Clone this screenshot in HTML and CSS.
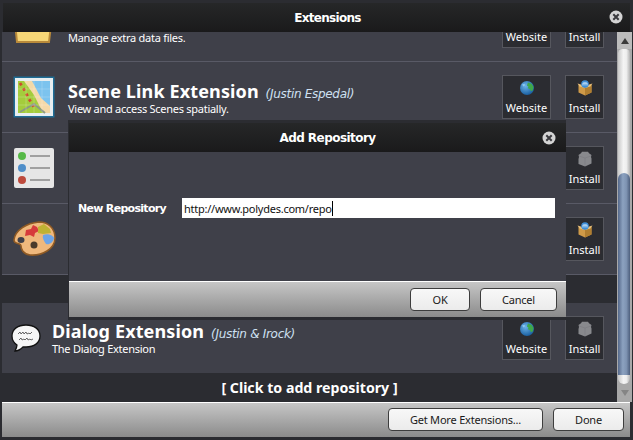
FILE: index.html
```html
<!DOCTYPE html>
<html lang="en">
<head>
<meta charset="utf-8">
<title>Extensions</title>
<link rel="stylesheet" href="styles.css">
</head>
<body>
<svg class="defs" width="0" height="0" aria-hidden="true">
  <defs>
    <radialGradient id="globeFill" cx="40%" cy="35%" r="70%">
      <stop offset="0" stop-color="#6db4ea"/><stop offset="1" stop-color="#145a9c"/>
    </radialGradient>
    <symbol id="globe" viewBox="0 0 16 16">
      <circle cx="8" cy="8" r="7" fill="url(#globeFill)"/>
      <path d="M9 2.5l3.5 1.2 2 3-.6 3.5-1.8 1-1.2-2.2-2-.8.6-1.6-1.6-1.2z" fill="#3fa84a"/>
      <path d="M3 4.5l2.5-.7.6 1.5-1.6 1.2z" fill="#8ec9f0"/>
    </symbol>
    <symbol id="box" viewBox="0 0 16 16">
      <path d="M1.500 5l6.500 2.400L14.500 5v7.500L8 15.500l-6.500-3z" fill="#cf9a48"/>
      <path d="M8 7.400L14.500 5v7.500L8 15.500z" fill="#b07e30"/>
      <path d="M.5 3.500L2.600 6.500 8 8 5.500 5zM15.500 3.500L13.400 6.500 8 8l2.500-3z" fill="#ecc27a"/>
      <circle cx="8" cy="4" r="3.800" fill="#3f8fd8"/>
      <path d="M6 5.500V3h4v2.500M8 2.500v3" stroke="#e4f2ff" stroke-width=".8" fill="none"/>
    </symbol>
    <symbol id="boxOff" viewBox="0 0 16 16">
      <path d="M5 .8h6l1 1.500 2.500 1.700-.5 2 .5 1.500v5L8 15.500l-6.500-2.500v-5L2 6l-.5-2L4 2.300z" fill="#88898d"/>
      <path d="M8 7v8M2 5l6 2 6-2" stroke="#7a7b7f" stroke-width=".6" fill="none"/>
    </symbol>
  </defs>
</svg>
<div class="window">
  <header class="titlebar">
    <span class="title-text">Extensions</span>
    <span class="close"><svg viewBox="0 0 14 14" width="14" height="14"><circle cx="7" cy="7" r="6.500" fill="#d4d4d4"/><path d="M4.300 4.300l5.400 5.400M9.700 4.300l-5.400 5.400" stroke="#3a3a3e" stroke-width="2"/></svg></span>
  </header>
  <div class="middle">
    <div class="list">
      <div class="scrolled">
        <section class="row">
          <div class="icon"><svg viewBox="0 0 44 44" width="44" height="44"><path d="M2 9h7l3-3h22v4l6 2-3 26H5z" fill="#f6d677" stroke="#b98a3a" stroke-width="2"/></svg></div>
          <div class="info info-plain"><p class="desc">Manage extra data files.</p></div>
          <div class="actions">
            <div class="act act-web"><svg class="act-ic"><use href="#globe"/></svg><span>Website</span></div>
            <div class="act act-ins"><svg class="act-ic"><use href="#box"/></svg><span>Install</span></div>
          </div>
        </section>
        <section class="row">
          <div class="icon">
            <svg viewBox="0 0 42 42" width="42" height="42">
              <rect x="0.500" y="0.500" width="41" height="41" fill="#1e6d96"/>
              <rect x="2" y="2" width="38" height="38" fill="#e8eef0"/>
              <rect x="5" y="5" width="32" height="32" fill="#7cc3ee"/>
              <path d="M5 5h14l9 17 9 8v7H5z" fill="#f4d9a8"/>
              <path d="M5 5h6l10 14 9 18H5z" fill="#a4cc3c"/>
              <path d="M7 7l5 8 4 8 5 8" stroke="#cf4a2e" stroke-width="2.800" stroke-dasharray="2.800 3.400" fill="none"/>
              <path d="M7 36l14-8 11 9" stroke="#8c9a82" stroke-width="2" fill="none"/>
              <path d="M13 5v32M21 5v32M29 5v32M5 13h32M5 21h32M5 29h32" stroke="#fff" stroke-opacity=".25" stroke-width=".8"/>
            </svg>
          </div>
          <div class="info"><h2 class="name">Scene Link Extension <em class="author">(Justin Espedal)</em></h2><p class="desc">View and access Scenes spatially.</p></div>
          <div class="actions">
            <div class="act act-web"><svg class="act-ic"><use href="#globe"/></svg><span>Website</span></div>
            <div class="act act-ins"><svg class="act-ic"><use href="#box"/></svg><span>Install</span></div>
          </div>
        </section>
        <section class="row">
          <div class="icon">
            <svg viewBox="0 0 40 40" width="40" height="40">
              <rect width="40" height="40" rx="2" fill="#e6e6e6"/>
              <circle cx="8" cy="8" r="4" fill="#56b947"/><circle cx="8" cy="20" r="4" fill="#4f8ec9"/><circle cx="8" cy="32" r="4" fill="#bd4a3c"/>
              <path d="M16 8h20M16 20h20M16 32h20" stroke="#a0a0a0" stroke-width="2"/>
            </svg>
          </div>
          <div class="info"></div>
          <div class="actions">
            <div class="act act-web"></div>
            <div class="act act-ins"><svg class="act-ic"><use href="#boxOff"/></svg><span>Install</span></div>
          </div>
        </section>
        <section class="row">
          <div class="icon">
            <svg viewBox="0 0 44 36" width="44" height="36">
              <path d="M2 19C3 9 15 2 27 1c9 0 16 6 16 16 0 11-13 18-25 17C11 33 9 28 9 25c0-4-7-1-7-6z" fill="#efb87c" stroke="#8f5a24" stroke-width="1.600"/>
              <ellipse cx="9" cy="19" rx="3.500" ry="3" fill="#3f4049"/>
              <circle cx="22" cy="24" r="3.500" fill="#4a3a2a"/>
              <path d="M14 9l5-1 2-4 4 2 2 4-4 2-1 4-4-2-5 1z" fill="#d63b3b"/>
              <path d="M26 6l6-3 6 5 1 4-8 1-5-1z" fill="#bfb233"/>
              <path d="M31 14c4-2 10 0 11 3-1 5-5 7-8 6-2-3-4-6-3-9z" fill="#6da4e6"/>
            </svg>
          </div>
          <div class="info"></div>
          <div class="actions">
            <div class="act act-web"></div>
            <div class="act act-ins"><svg class="act-ic"><use href="#box"/></svg><span>Install</span></div>
          </div>
        </section>
        <div class="gap"></div>
        <section class="row row-compact">
          <div class="icon icon-small">
            <svg viewBox="0 0 30 28" width="30" height="28">
              <path d="M15 1C7 1 1 5 1 12c0 4 2 7 5 9 0 2-1 4-2 6 3 0 6-2 8-4 1 0 2 0 3 0 8 0 14-4 14-11S23 1 15 1z" fill="#f6f6f6" stroke="#111" stroke-width="1.300"/>
              <path d="M7 10l2-2 1 2 2-2 1 2 2-2 1 2 2-1 1 1 2-2M8 16l2-2 1 2 2-1 1 1 2-2 1 2 2-1 1 1 2-1" stroke="#444" stroke-width=".8" fill="none"/>
            </svg>
          </div>
          <div class="info"><h2 class="name">Dialog Extension <em class="author">(Justin &amp; Irock)</em></h2><p class="desc">The Dialog Extension</p></div>
          <div class="actions">
            <div class="act act-web"><svg class="act-ic"><use href="#globe"/></svg><span>Website</span></div>
            <div class="act act-ins"><svg class="act-ic"><use href="#boxOff"/></svg><span>Install</span></div>
          </div>
        </section>
      </div>
      <div class="add-repo">[ Click to add repository ]</div>
    </div>
    <div class="scrollbar">
      <div class="arrow"><span class="tri-up"></span></div>
      <div class="track"><div class="thumb"></div></div>
      <div class="arrow arrow-down"><span class="tri-down"></span></div>
    </div>
  </div>
  <footer class="buttonbar">
    <button class="btn btn-more">Get More Extensions...</button>
    <button class="btn btn-done">Done</button>
  </footer>
</div>
<div class="dialog">
  <header class="dialog-title">
    <span class="dialog-title-text">Add Repository</span>
    <span class="close close-d"><svg viewBox="0 0 14 14" width="14" height="14"><circle cx="7" cy="7" r="6.500" fill="#d4d4d4"/><path d="M4.300 4.300l5.400 5.400M9.700 4.300l-5.400 5.400" stroke="#3a3a3e" stroke-width="2"/></svg></span>
  </header>
  <div class="dialog-body">
    <label class="field-label">New Repository</label>
    <div class="field"><span>http://www.polydes.com/repo</span><i class="caret"></i></div>
  </div>
  <footer class="dialog-foot">
    <button class="btn btn-ok">OK</button>
    <button class="btn btn-cancel">Cancel</button>
  </footer>
</div>
</body>
</html>
```

FILE: styles.css
```css
* { box-sizing: border-box; }
html, body { margin: 0; height: 100%; }
body { background: #2b2c31; font-family: "Noto Sans", "DejaVu Sans", sans-serif; overflow: hidden; position: relative; color: #fff; }
.defs { position: absolute; }
.window { width: 633px; height: 440px; display: flex; flex-direction: column; padding: 3px 1px 3px 2px; }
.titlebar { height: 29px; flex: none; margin-left: 1px; margin-right: 2px; background: linear-gradient(#262728, #1a1a1b); display: flex; align-items: center; justify-content: center; position: relative; padding-left: 22px; }
.title-text { font: bold 12px "DejaVu Sans", sans-serif; letter-spacing: -0.7px; }
.close { position: absolute; right: 7px; top: 7px; width: 14px; height: 14px; display: block; }
.close svg { display: block; }
.middle { flex: 1; min-height: 0; display: flex; }
.list { flex: 1; min-width: 0; display: flex; flex-direction: column; overflow: hidden; }
.scrolled { flex: 1; min-height: 0; overflow: hidden; }
.row { height: 71px; display: flex; align-items: flex-start; background: #3f4049; border-bottom: 1px solid #595a66; padding: 13px 13px 0 10px; }
.row:first-child { margin-top: -41px; }
.icon { width: 44px; height: 44px; flex: none; margin-right: 12px; display: flex; align-items: center; justify-content: center; }
.icon svg { display: block; }
.icon-small { width: 32px; margin: 8px 10px 0 -2px; height: 28px; }
.info { flex: 1; min-width: 0; padding-top: 6px; }
.info-plain { padding-top: 27px; }
.row-compact .info { padding-top: 5px; }
.name { margin: 0; height: 21px; font: bold 18px/21px "Noto Sans", sans-serif; letter-spacing: 0.13px; white-space: nowrap; }
.author { font: italic 12px/14px "DejaVu Sans", sans-serif; color: #cfe0f2; font-weight: normal; letter-spacing: -0.3px; margin-left: 2px; }
.desc { margin: 0; font: 11px/14px "Noto Sans", sans-serif; letter-spacing: -0.27px; white-space: nowrap; }
.actions { display: flex; gap: 14px; flex: none; }
.act { height: 44px; background: #2b2c31; border: 1px solid #56575e; display: flex; flex-direction: column; align-items: center; color: #fff; font: 11px/14px "Noto Sans", sans-serif; padding-top: 4px; }
.act-ic { width: 16px; height: 16px; display: block; margin-bottom: 5px; }
.act-web { width: 49px; }
.act-ins { width: 39px; }
.gap { height: 28px; background: #2b2c31; }
.add-repo { height: 29px; flex: none; background: #2b2c31; text-align: center; font: bold 14.200px/29px "Noto Sans", sans-serif; }
.scrollbar { width: 15px; flex: none; background: #a9a9aa; display: flex; flex-direction: column; }
.arrow { height: 17px; flex: none; display: flex; align-items: center; justify-content: center; background: #bcbcbc; }
.arrow-down { height: 18px; background: #a8a8a8; }
.tri-up { width: 0; height: 0; border: 4px solid transparent; border-top: 0; border-bottom: 6px solid #3a3a3a; }
.tri-down { width: 0; height: 0; border: 4px solid transparent; border-bottom: 0; border-top: 6px solid #858585; }
.track { flex: 1; min-height: 0; margin: 0 2px 0 1px; background: linear-gradient(90deg, #c8c8c8, #f4f4f4 45%, #eee 70%, #b5b5b5); border-radius: 6px 6px 8px 8px; padding-top: 124px; padding-bottom: 9px; display: flex; }
.thumb { flex: 1; background: linear-gradient(90deg, #55688a, #8ca2c0 40%, #7e93b2 70%, #4d5f7d); border-radius: 6px 6px 0 0; }
.buttonbar { height: 35px; flex: none; margin-right: 2px; background: linear-gradient(#c6c6c6, #8b8b8b); border-top: 1px solid #fff; display: flex; justify-content: flex-end; align-items: center; gap: 10px; padding-right: 6px; padding-bottom: 1px; }
.btn { height: 23px; border: 1px solid #3d3d3d; border-radius: 4px; background: linear-gradient(#f8f8f8, #ebebeb); color: #1a1a1a; font: 11px "Noto Sans", sans-serif; letter-spacing: -0.2px; padding: 0; }
.btn-more { width: 155px; }
.btn-done { width: 71px; }
.btn-ok { width: 60px; }
.btn-cancel { width: 77px; }
.dialog { position: absolute; left: 68px; top: 120px; width: 498px; height: 200px; background: #2b2c31; padding: 3px 0 3px 1px; display: flex; flex-direction: column; }
.dialog-title { height: 29px; flex: none; background: linear-gradient(#262728, #1a1a1b); display: flex; align-items: center; justify-content: center; position: relative; padding-left: 20px; }
.dialog-title-text { font: bold 12px "DejaVu Sans", sans-serif; letter-spacing: -0.55px; }
.close-d { right: 10px; top: 8px; }
.dialog-body { flex: 1; min-height: 0; background: #3f4049; display: flex; align-items: flex-start; padding: 46px 11px 0 9px; }
.field-label { width: 104px; flex: none; font: bold 11px/22px "DejaVu Sans", sans-serif; letter-spacing: -0.7px; }
.field { flex: 1; height: 20px; background: #fff; color: #111; font: 11px/14px "Noto Sans", sans-serif; letter-spacing: -0.25px; padding: 1px 0 0 2px; display: flex; align-items: center; }
.caret { width: 1px; height: 15px; background: #000; }
.dialog-foot { height: 36px; flex: none; background: linear-gradient(#c6c6c6, #8b8b8b); border-top: 1px solid #fff; display: flex; justify-content: flex-end; align-items: center; gap: 10px; padding-right: 9px; }
```
